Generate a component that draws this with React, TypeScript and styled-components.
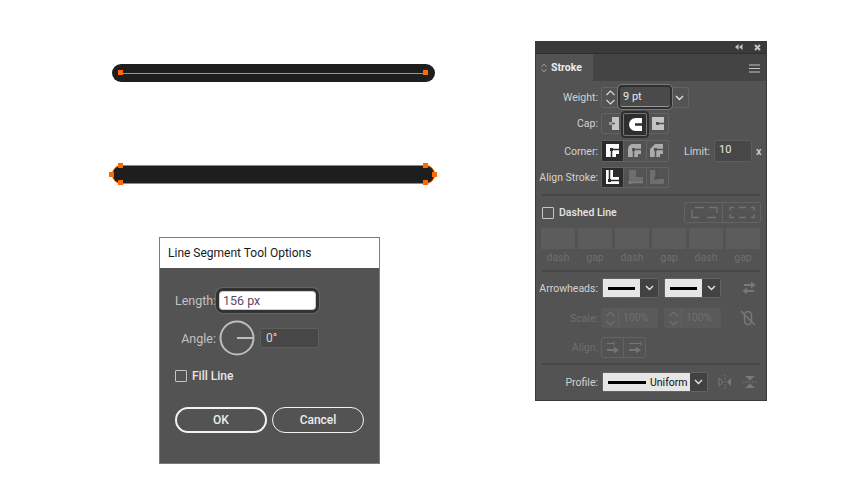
import styled, { createGlobalStyle } from "styled-components";

const GlobalStyle = createGlobalStyle`
  html, body { margin: 0; padding: 0; background: #fff; }
  body { font-family: Roboto, "Liberation Sans", sans-serif; }
`;

const Page = styled.div`
  width: 850px;
  height: 500px;
  display: flex;
  overflow: hidden;
  background: #fff;
`;

const Artboard = styled.div`
  width: 535px;
  display: flex;
  flex-direction: column;
  padding-top: 64px;
  box-sizing: border-box;
`;

/* canvas strokes */
const StrokeBar = styled.div<{ $outlined?: boolean }>`
  position: relative;
  box-sizing: border-box;
  margin-left: 112px;
  width: 323px;
  height: ${(p) => (p.$outlined ? 19 : 18)}px;
  margin-top: ${(p) => (p.$outlined ? 83 : 0)}px;
  border-radius: 9px;
  background: #1e1e1e;
  border: ${(p) => (p.$outlined ? "1px solid #ff6a00" : "none")};
`;

const PathLine = styled.div`
  position: absolute;
  left: 8px;
  right: 8px;
  top: 9px;
  height: 1px;
  background: #ff7a1a;
`;

const Handle = styled.span<{ $x: number; $y: number }>`
  position: absolute;
  left: ${(p) => p.$x}px;
  top: ${(p) => p.$y}px;
  width: 5px;
  height: 5px;
  background: #ff6a00;
`;

/* Line Segment Tool Options dialog */
const Dialog = styled.div`
  box-sizing: border-box;
  margin: 53px 0 0 159px;
  width: 221px;
  height: 227px;
  border: 1px solid #7c7c7c;
  background: #535353;
  color: #d6d6d6;
  font-size: 12px;
`;

const DialogTitle = styled.div`
  height: 30px;
  background: #fff;
  color: #1a1a1a;
  font-size: 12px;
  line-height: 30px;
  padding-left: 8px;
`;

const DialogBody = styled.div`
  display: flex;
  flex-direction: column;
  padding: 24px 0 0 15px;
`;

const DialogRow = styled.div<{ $mt?: number }>`
  display: flex;
  align-items: center;
  margin-top: ${(p) => p.$mt ?? 0}px;
`;

const DialogLabel = styled.label`
  width: 41px;
  text-align: right;
  color: #c2c2c2;
  font-size: 12.5px;
`;

const LengthField = styled.div`
  box-sizing: border-box;
  width: 95px;
  height: 17px;
  margin: 0 0 0 4px;
  padding-left: 3px;
  background: #fff;
  border-radius: 3px;
  color: #5b4a66;
  font-size: 12.5px;
  line-height: 17px;
  box-shadow: 0 0 0 1px #cfcfcf, 0 0 0 4px #323232, 0 0 0 5px #666;
`;

const AngleDial = styled.svg`
  width: 36px;
  height: 36px;
  margin-left: 3px;
  flex: none;
`;

const AngleField = styled.div`
  box-sizing: border-box;
  width: 59px;
  height: 20px;
  margin-left: 5px;
  padding-left: 5px;
  background: #474747;
  border: 1px solid #5e5e5e;
  border-radius: 2px;
  color: #d6d6d6;
  font-size: 12px;
  line-height: 18px;
`;

const CheckBox = styled.span`
  box-sizing: border-box;
  display: block;
  flex: none;
  width: 12px;
  height: 12px;
  border: 1px solid #c4c4c4;
  border-radius: 1px;
`;

const CheckText = styled.span`
  margin-left: 5px;
  color: #e6e6e6;
  font-size: 12px;
  font-weight: 500;
  line-height: 16px;
`;

const DialogButton = styled.button<{ $primary?: boolean }>`
  box-sizing: border-box;
  width: 92px;
  height: 26px;
  padding: 0;
  border-radius: 13px;
  background: transparent;
  border: ${(p) => (p.$primary ? 2 : 1)}px solid #f2f2f2;
  color: #ececec;
  font-family: inherit;
  font-size: 12px;
  font-weight: 500;
`;

const ButtonRow = styled(DialogRow)`
  gap: 5px;
`;

/* Stroke panel */
const Panel = styled.div`
  box-sizing: border-box;
  margin-top: 41px;
  width: 232px;
  height: 360px;
  background: #535353;
  border: 1px solid #3b3b3b;
  border-top: none;
  color: #d4d4d4;
  font-size: 10.5px;
  display: flex;
  flex-direction: column;
`;

const TitleBar = styled.div`
  height: 12px;
  flex: none;
  background: #3a3a3a;
  display: flex;
  align-items: center;
  justify-content: flex-end;
  gap: 11px;
  padding-right: 5px;
`;

const TabStrip = styled.div`
  height: 28px;
  flex: none;
  display: flex;
  background: #444;
  border-top: 1px solid #2f2f2f;
  box-sizing: border-box;
`;

const Tab = styled.div`
  width: 57px;
  background: #535353;
  display: flex;
  align-items: center;
  padding-left: 5px;
  gap: 4px;
  box-sizing: border-box;
  color: #ececec;
  font-size: 10.5px;
  font-weight: 700;
`;

const MenuGlyph = styled.svg`
  width: 11px;
  height: 9px;
  margin: 10px 6px 0 auto;
`;

const Row = styled.div<{ $mt: number; $h: number }>`
  display: flex;
  align-items: center;
  flex: none;
  height: ${(p) => p.$h}px;
  margin-top: ${(p) => p.$mt}px;
`;

const Label = styled.span<{ $dim?: boolean }>`
  width: 62px;
  flex: none;
  text-align: right;
  white-space: nowrap;
  font-size: 10.5px;
  color: ${(p) => (p.$dim ? "#6f6f6f" : "#d2d2d2")};
`;

const Group = styled.div<{ $w: number; $ml?: number }>`
  box-sizing: border-box;
  position: relative;
  display: flex;
  align-items: stretch;
  width: ${(p) => p.$w}px;
  height: 100%;
  margin-left: ${(p) => p.$ml ?? 3}px;
  border: 1px solid #636363;
  border-radius: 2px;
`;

const Cell = styled.div<{ $active?: boolean; $divided?: boolean }>`
  flex: 1;
  display: flex;
  align-items: center;
  justify-content: center;
  background: ${(p) => (p.$active ? "#2b2b2b" : "transparent")};
  border-left: ${(p) => (p.$divided ? "1px solid #636363" : "none")};
`;

const StepperCell = styled.div`
  width: 16px;
  flex: none;
  display: flex;
  align-items: center;
  justify-content: center;
`;

const WeightField = styled.div`
  position: absolute;
  left: 16px;
  top: -3px;
  box-sizing: border-box;
  width: 54px;
  height: 24px;
  padding-left: 3px;
  background: #4a4a4a;
  border: 2px solid #2f2f2f;
  border-radius: 4px;
  outline: 1px solid #7a7a7a;
  outline-offset: 0;
  box-shadow: inset 0 -1px 0 #9a9a9a;
  color: #e8e8e8;
  font-size: 11px;
  line-height: 19px;
`;

const FocusCell = styled.div`
  position: absolute;
  left: 19px;
  top: -3px;
  box-sizing: border-box;
  width: 28px;
  height: 27px;
  display: flex;
  align-items: center;
  justify-content: center;
  background: #2e2e2e;
  border-radius: 4px;
  box-shadow: inset 0 0 0 2px #2e2e2e, inset 0 0 0 3px #777;
`;

const DropEnd = styled.div`
  margin-left: auto;
  width: 17px;
  display: flex;
  align-items: center;
  justify-content: center;
`;

const LimitLabel = styled.span`
  margin-left: 10px;
  width: 31px;
  text-align: right;
  font-size: 10.5px;
  color: #d2d2d2;
`;

const LimitField = styled.div`
  box-sizing: border-box;
  width: 38px;
  height: 100%;
  margin-left: 4px;
  padding-left: 4px;
  background: #474747;
  border: 1px solid #5e5e5e;
  border-radius: 2px;
  color: #e8e8e8;
  font-size: 11px;
  line-height: 18px;
`;

const Unit = styled.span`
  margin-left: 4px;
  font-size: 11px;
  font-weight: 500;
`;

const Divider = styled.div<{ $mt: number }>`
  flex: none;
  height: 2px;
  margin: ${(p) => p.$mt}px 6px 0 6px;
  background: #464646;
`;

const DashedRow = styled(Row)`
  padding: 0 5px 0 6px;
`;

const DashedText = styled.span`
  margin-left: 5px;
  flex: none;
  white-space: nowrap;
  color: #e6e6e6;
  font-size: 10.5px;
  font-weight: 500;
`;

const DashGroup = styled(Group)`
  margin-left: auto;
`;

const DashGrid = styled.div`
  display: grid;
  grid-template-columns: repeat(6, 34px);
  column-gap: 3px;
  margin: 5px 0 0 5px;
`;

const DashBox = styled.div`
  height: 21px;
  background: #5c5c5c;
`;

const DashLabel = styled.div`
  text-align: center;
  color: #6f6f6f;
  font-size: 10.5px;
  line-height: 15px;
  margin-top: 1px;
`;

const ArrowSelect = styled.div<{ $ml: number; $w: number }>`
  box-sizing: border-box;
  display: flex;
  width: ${(p) => p.$w}px;
  height: 100%;
  margin-left: ${(p) => p.$ml}px;
  border: 1px solid #636363;
  border-radius: 2px;
`;

const ArrowSwatch = styled.div<{ $w: number }>`
  width: ${(p) => p.$w}px;
  background: #e6e6e6;
  display: flex;
  align-items: center;
  gap: 4px;
  padding-left: 5px;
  box-sizing: border-box;
  color: #111;
  font-size: 10.5px;
  font-weight: 400;
  white-space: nowrap;
`;

const Rule = styled.span<{ $w: number }>`
  display: block;
  width: ${(p) => p.$w}px;
  height: 3px;
  flex: none;
  background: #000;
`;

const ArrowDrop = styled.div`
  flex: 1;
  background: #424242;
  display: flex;
  align-items: center;
  justify-content: center;
`;

const ScaleValue = styled.span`
  color: #6f6f6f;
  font-size: 10.5px;
  padding-left: 4px;
  line-height: 18px;
  border-left: 1px solid #636363;
`;

const DisabledGroup = styled(Group)`
  background: #5a5a5a;
  border-color: #5a5a5a;
`;

const SideIcon = styled.svg<{ $ml: number }>`
  flex: none;
  width: 16px;
  height: 16px;
  margin-left: ${(p) => p.$ml}px;
`;

const Chevron = ({ color = "#e4e4e4" }: { color?: string }) => (
  <svg width="9" height="6" viewBox="0 0 9 6">
    <path d="M1 1l3.5 3.5L8 1" fill="none" stroke={color} strokeWidth="1.4" />
  </svg>
);

const Stepper = ({ color = "#d8d8d8" }: { color?: string }) => (
  <svg width="11" height="17" viewBox="0 0 11 17">
    <path d="M1.5 6l4-4 4 4M1.5 11l4 4 4-4" fill="none" stroke={color} strokeWidth="1.2" />
  </svg>
);

// cap icons share one layout: shape, notch running right from the path node
const CapIcon = ({ kind }: { kind: "butt" | "round" | "square" }) => {
  if (kind === "butt") {
    return (
      <svg width="20" height="19" viewBox="0 0 20 19">
        <path d="M9 3h7v13H9z" fill="#c4c4c4" />
        <path d="M7 9.5h5" stroke="#535353" strokeWidth="1.5" />
        <rect x="6" y="8" width="3" height="3" fill="#9a9a9a" />
      </svg>
    );
  }
  if (kind === "round") {
    return (
      <svg width="20" height="19" viewBox="0 0 20 19">
        <path d="M17 3H10.5a6.5 6.5 0 0 0 0 13H17V10.75H10V8.25h7z" fill="#fff" />
      </svg>
    );
  }
  return (
    <svg width="20" height="19" viewBox="0 0 20 19">
      <path d="M5 3h12v13H5z" fill="#c4c4c4" />
      <path d="M10 9.5h7" stroke="#535353" strokeWidth="1.5" />
      <rect x="9" y="8" width="3" height="3" fill="#535353" />
    </svg>
  );
};

const CORNER_SHAPES = {
  miter: "M3 3H16V13H13V16H3Z",
  round: "M8 3H16V13H13V16H3V8A5 5 0 0 1 8 3Z",
  bevel: "M8 3H16V13H13V16H3V8Z",
};

const CornerIcon = ({ kind, on }: { kind: "miter" | "round" | "bevel"; on?: boolean }) => {
  const line = on ? "#2b2b2b" : "#535353";
  return (
    <svg width="20" height="20" viewBox="0 0 20 20">
      <path d={CORNER_SHAPES[kind]} fill={on ? "#fff" : "#ababab"} />
      <path d="M8.5 16V8.5H16" fill="none" stroke={line} strokeWidth="1.5" />
      <rect x="7" y="7" width="3" height="3" fill={line} />
    </svg>
  );
};

const AlignIcon = ({ kind }: { kind: "center" | "inside" | "outside" }) => {
  if (kind === "center") {
    return (
      <svg width="20" height="20" viewBox="0 0 20 20">
        <path d="M3 2H10V9H16V16H3Z" fill="#fff" />
        <path d="M6.5 2V12.5H16" fill="none" stroke="#2b2b2b" strokeWidth="1.5" />
        <rect x="5" y="11" width="3" height="3" fill="#2b2b2b" />
      </svg>
    );
  }
  if (kind === "inside") {
    return (
      <svg width="20" height="20" viewBox="0 0 20 20">
        <path d="M6 2H11V9H18V14H6Z" fill="#6e6e6e" />
        <path d="M5 2V14.5H18" fill="none" stroke="#7c7c7c" strokeWidth="1.3" />
        <rect x="3.5" y="13" width="3" height="3" fill="#7c7c7c" />
      </svg>
    );
  }
  return (
    <svg width="20" height="20" viewBox="0 0 20 20">
      <path d="M3 2H9V10H17V16H3Z" fill="#6e6e6e" />
      <path d="M9 2V10H17" fill="none" stroke="#4d4d4d" strokeWidth="1.3" />
      <rect x="7.5" y="8.5" width="3" height="3" fill="#4d4d4d" />
    </svg>
  );
};

const DashedAlign = ({ kind }: { kind: "exact" | "adjust" }) => (
  <svg width="28" height="15" viewBox="0 0 28 15">
    {kind === "exact" ? (
      <path d="M2 5V12.5H9M5 2.5H14M19 2.5H27V8M17 12.5H26" fill="none" stroke="#737373" strokeWidth="1.3" />
    ) : (
      <path d="M2 6V2.5H6M11 2.5H18M23 2.5H26V6M2 9V12.5H6M11 12.5H18M23 12.5H26V9" fill="none" stroke="#737373" strokeWidth="1.3" />
    )}
  </svg>
);

const AlignArrow = ({ end }: { end?: boolean }) => (
  <svg width="18" height="15" viewBox="0 0 18 15">
    <path d={end ? "M3 3.5H15M15 1.5V5.5" : "M3 3.5H10M10 1.5V5.5"} stroke="#757575" fill="none" />
    <path d="M3 10H11" stroke="#757575" strokeWidth="2" />
    <path d="M10 6.5l5 3.5-5 3.5z" fill="#757575" />
  </svg>
);

const PANEL_DASH_LABELS = ["dash", "gap", "dash", "gap", "dash", "gap"];

export default function App() {
  return (
    <Page>
      <GlobalStyle />
      <Artboard>
        <StrokeBar>
          <PathLine />
          <Handle $x={6} $y={6} />
          <Handle $x={311} $y={6} />
        </StrokeBar>
        <StrokeBar $outlined>
          <Handle $x={5} $y={-3} />
          <Handle $x={5} $y={14} />
          <Handle $x={-4} $y={6} />
          <Handle $x={310} $y={-3} />
          <Handle $x={310} $y={14} />
          <Handle $x={319} $y={6} />
        </StrokeBar>

        <Dialog>
          <DialogTitle>Line Segment Tool Options</DialogTitle>
          <DialogBody>
            <DialogRow $mt={0}>
              <DialogLabel>Length:</DialogLabel>
              <LengthField>156 px</LengthField>
            </DialogRow>
            <DialogRow $mt={11}>
              <DialogLabel>Angle:</DialogLabel>
              <AngleDial viewBox="0 0 36 36">
                <circle cx="18" cy="18" r="16.5" fill="none" stroke="#bdbdbd" strokeWidth="2" />
                <path d="M18 18h16" stroke="#bdbdbd" strokeWidth="2" />
              </AngleDial>
              <AngleField>0°</AngleField>
            </DialogRow>
            <DialogRow $mt={12}>
              <CheckBox />
              <CheckText>Fill Line</CheckText>
            </DialogRow>
            <ButtonRow $mt={23}>
              <DialogButton $primary>OK</DialogButton>
              <DialogButton>Cancel</DialogButton>
            </ButtonRow>
          </DialogBody>
        </Dialog>
      </Artboard>

      <Panel>
        <TitleBar>
          <svg width="8" height="6" viewBox="0 0 8 6">
            <path d="M3.5 0v6L0 3zM7.5 0v6L4 3z" fill="#c4c4c4" />
          </svg>
          <svg width="7" height="7" viewBox="0 0 7 7">
            <path d="M1 1l5 5M6 1L1 6" stroke="#c4c4c4" strokeWidth="2" />
          </svg>
        </TitleBar>
        <TabStrip>
          <Tab>
            <svg width="6" height="10" viewBox="0 0 6 10">
              <path d="M.5 4L3 1l2.5 3M.5 6L3 9l2.5-3" fill="none" stroke="#9a9a9a" />
            </svg>
            Stroke
          </Tab>
          <MenuGlyph viewBox="0 0 11 9">
            <path d="M0 1h11M0 4.5h11M0 8h11" stroke="#c4c4c4" />
          </MenuGlyph>
        </TabStrip>

        <Row $mt={6} $h={21}>
          <Label>Weight:</Label>
          <Group $w={88}>
            <StepperCell>
              <Stepper />
            </StepperCell>
            <WeightField>9 pt</WeightField>
            <DropEnd>
              <Chevron />
            </DropEnd>
          </Group>
        </Row>
        <Row $mt={5} $h={21}>
          <Label>Cap:</Label>
          <Group $w={68}>
            <Cell>
              <CapIcon kind="butt" />
            </Cell>
            <FocusCell>
              <CapIcon kind="round" />
            </FocusCell>
            <Cell />
            <Cell>
              <CapIcon kind="square" />
            </Cell>
          </Group>
        </Row>
        <Row $mt={6} $h={22}>
          <Label>Corner:</Label>
          <Group $w={68}>
            <Cell $active>
              <CornerIcon kind="miter" on />
            </Cell>
            <Cell $divided>
              <CornerIcon kind="round" />
            </Cell>
            <Cell $divided>
              <CornerIcon kind="bevel" />
            </Cell>
          </Group>
          <LimitLabel>Limit:</LimitLabel>
          <LimitField>10</LimitField>
          <Unit>x</Unit>
        </Row>
        <Row $mt={5} $h={21}>
          <Label>Align Stroke:</Label>
          <Group $w={68}>
            <Cell $active>
              <AlignIcon kind="center" />
            </Cell>
            <Cell $divided>
              <AlignIcon kind="inside" />
            </Cell>
            <Cell $divided>
              <AlignIcon kind="outside" />
            </Cell>
          </Group>
        </Row>
        <Divider $mt={6} />

        <DashedRow $mt={6} $h={21}>
          <CheckBox />
          <DashedText>Dashed Line</DashedText>
          <DashGroup $w={77}>
            <Cell>
              <DashedAlign kind="exact" />
            </Cell>
            <Cell $divided>
              <DashedAlign kind="adjust" />
            </Cell>
          </DashGroup>
        </DashedRow>
        <DashGrid>
          {PANEL_DASH_LABELS.map((_, i) => (
            <DashBox key={i} />
          ))}
          {PANEL_DASH_LABELS.map((label, i) => (
            <DashLabel key={i}>{label}</DashLabel>
          ))}
        </DashGrid>
        <Divider $mt={5} />

        <Row $mt={6} $h={20}>
          <Label>Arrowheads:</Label>
          <ArrowSelect $ml={4} $w={57}>
            <ArrowSwatch $w={37}>
              <Rule $w={27} />
            </ArrowSwatch>
            <ArrowDrop>
              <Chevron />
            </ArrowDrop>
          </ArrowSelect>
          <ArrowSelect $ml={5} $w={57}>
            <ArrowSwatch $w={37}>
              <Rule $w={27} />
            </ArrowSwatch>
            <ArrowDrop>
              <Chevron />
            </ArrowDrop>
          </ArrowSelect>
          <SideIcon $ml={20} viewBox="0 0 16 16">
            <path d="M3 5h8M13 11H5" stroke="#787878" strokeWidth="2" />
            <path d="M10 1.5l4.5 3.5-4.5 3.5zM6 7.5L1.5 11 6 14.5z" fill="#787878" />
          </SideIcon>
        </Row>
        <Row $mt={10} $h={20}>
          <Label $dim>Scale:</Label>
          <DisabledGroup $w={57}>
            <StepperCell>
              <Stepper color="#707070" />
            </StepperCell>
            <ScaleValue>100%</ScaleValue>
          </DisabledGroup>
          <DisabledGroup $w={57} $ml={6}>
            <StepperCell>
              <Stepper color="#707070" />
            </StepperCell>
            <ScaleValue>100%</ScaleValue>
          </DisabledGroup>
          <SideIcon $ml={19} viewBox="0 0 16 16">
            <rect x="4.5" y="1.5" width="7" height="13" rx="3.5" fill="none" stroke="#787878" strokeWidth="1.5" />
            <path d="M1 1l14 14" stroke="#787878" strokeWidth="1.5" />
          </SideIcon>
        </Row>
        <Row $mt={9} $h={21}>
          <Label $dim>Align:</Label>
          <Group $w={45}>
            <Cell>
              <AlignArrow />
            </Cell>
            <Cell $divided>
              <AlignArrow end />
            </Cell>
          </Group>
        </Row>
        <Divider $mt={5} />

        <Row $mt={7} $h={20}>
          <Label>Profile:</Label>
          <ArrowSelect $ml={4} $w={106}>
            <ArrowSwatch $w={87}>
              <Rule $w={38} />
              Uniform
            </ArrowSwatch>
            <ArrowDrop>
              <Chevron />
            </ArrowDrop>
          </ArrowSelect>
          <SideIcon $ml={9} viewBox="0 0 16 16">
            <path d="M8 1v14" stroke="#787878" strokeDasharray="1.5 1.5" />
            <path d="M2 4l4 4-4 4z" fill="none" stroke="#787878" />
            <path d="M14 4l-4 4 4 4z" fill="#787878" />
          </SideIcon>
          <SideIcon $ml={9} viewBox="0 0 16 16">
            <path d="M1 8h14" stroke="#787878" strokeDasharray="1.5 1.5" />
            <path d="M3 2h10L8 6.5z" fill="#787878" />
            <path d="M3 14h10L8 9.5z" fill="#787878" />
          </SideIcon>
        </Row>
      </Panel>
    </Page>
  );
}
